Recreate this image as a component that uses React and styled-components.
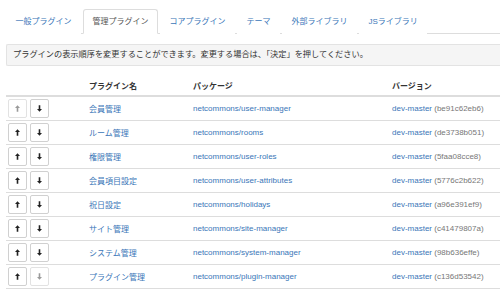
import styled, { createGlobalStyle } from "styled-components"

const GlobalStyle = createGlobalStyle`
body {
    margin: 0;
    background: #fff;
    overflow: hidden;
    font-family: "Liberation Sans", "Noto Sans CJK JP", sans-serif;
    font-size: 8px;
    color: #333;
}
`

const tabs = ["一般プラグイン", "管理プラグイン", "コアプラグイン", "テーマ", "外部ライブラリ", "JSライブラリ"]

const plugins = [
    { name: "会員管理", pkg: "netcommons/user-manager", hash: "be91c62eb6" },
    { name: "ルーム管理", pkg: "netcommons/rooms", hash: "de3738b051" },
    { name: "権限管理", pkg: "netcommons/user-roles", hash: "5faa08cce8" },
    { name: "会員項目設定", pkg: "netcommons/user-attributes", hash: "5776c2b622" },
    { name: "祝日設定", pkg: "netcommons/holidays", hash: "a96e391ef9" },
    { name: "サイト管理", pkg: "netcommons/site-manager", hash: "c41479807a" },
    { name: "システム管理", pkg: "netcommons/system-manager", hash: "98b636effe" },
    { name: "プラグイン管理", pkg: "netcommons/plugin-manager", hash: "c136d53542" },
]

function Arrow({ down }) {
    return (
        <svg width="5" height="7" viewBox="0 0 10 13" style={{ transform: down ? "rotate(180deg)" : "none" }}>
            <path d="M5 0 L10 5.5 H6.6 V13 H3.4 V5.5 H0 Z" fill="currentColor" />
        </svg>
    )
}

export default function App() {
    return (
        <Page>
            <GlobalStyle />
            <Tabs>
                {tabs.map((t, i) => (
                    <Tab key={t} $active={i === 1}>{t}</Tab>
                ))}
            </Tabs>
            <Notice>プラグインの表示順序を変更することができます。変更する場合は、「決定」を押してください。</Notice>
            <Table>
                <HeadRow>
                    <Cell></Cell>
                    <Cell>プラグイン名</Cell>
                    <Cell>パッケージ</Cell>
                    <Cell>バージョン</Cell>
                </HeadRow>
                {plugins.map((p, i) => (
                    <Row key={p.pkg}>
                        <Cell>
                            <Buttons>
                                <MoveButton $disabled={i === 0}><Arrow /></MoveButton>
                                <MoveButton $disabled={i === plugins.length - 1}><Arrow down /></MoveButton>
                            </Buttons>
                        </Cell>
                        <Cell><Link>{p.name}</Link></Cell>
                        <Cell><Link>{p.pkg}</Link></Cell>
                        <Cell><Link>dev-master</Link> <Hash>({p.hash})</Hash></Cell>
                    </Row>
                ))}
            </Table>
        </Page>
    )
}

const Page = styled.div`
box-sizing: border-box;
width: 100%;
padding: 9px 0 0 6px;
`

const Tabs = styled.ul`
display: flex;
margin: 0;
padding: 0;
list-style: none;
border-bottom: 1px solid #ddd;
height: 24px;
`

const Tab = styled.li`
box-sizing: border-box;
height: 25px;
line-height: 23px;
padding: 0 8.5px;
margin-right: 2px;
border: 1px solid ${p => p.$active ? "#ddd" : "transparent"};
border-bottom-color: ${p => p.$active ? "#fff" : "transparent"};
border-radius: 3px 3px 0 0;
background: #fff;
color: ${p => p.$active ? "#555" : "#3a76b8"};
white-space: nowrap;
`

const Notice = styled.div`
margin-top: 10px;
height: 22px;
box-sizing: border-box;
line-height: 20px;
padding: 0 6px;
background: #f5f5f5;
border: 1px solid #e3e3e3;
border-right: none;
border-radius: 2px 0 0 2px;
color: #333;
font-size: 8.2px;
white-space: nowrap;
`

const Table = styled.div`
margin-top: 10px;
`

const Row = styled.div`
display: grid;
grid-template-columns: 81px 104px 199px 1fr;
align-items: center;
height: 24px;
border-bottom: 1px solid #ddd;
box-sizing: border-box;
`

const HeadRow = styled(Row)`
height: 21px;
border-bottom: 2px solid #ddd;
font-weight: bold;
color: #333;
`

const Cell = styled.div`
padding-left: 2px;
white-space: nowrap;
`

const Buttons = styled.div`
display: flex;
gap: 3px;
`

const MoveButton = styled.div`
box-sizing: border-box;
width: 19px;
height: 19px;
display: flex;
align-items: center;
justify-content: center;
background: #fff;
border: 1px solid ${p => p.$disabled ? "#e2e2e2" : "#d0d0d0"};
border-radius: 2px;
color: ${p => p.$disabled ? "#9a9a9a" : "#222"};
`

const Link = styled.span`
color: #3a76b8;
`

const Hash = styled.span`
color: #777;
`
